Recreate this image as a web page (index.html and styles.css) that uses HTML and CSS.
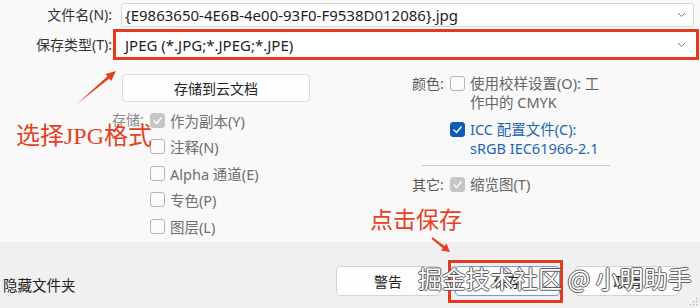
FILE: index.html
```html
<!DOCTYPE html>
<html lang="zh-CN">
<head>
    <meta charset="UTF-8">
    <meta name="viewport" content="width=device-width, initial-scale=1.0">
    <title>另存为</title>
    <link rel="stylesheet" href="styles.css">
</head>
<body>
<div class="dialog">
    <div class="fields">
        <div class="field-row">
            <label class="field-label">文件名(N):</label>
            <div class="field">
                <span>{E9863650-4E6B-4e00-93F0-F9538D012086}.jpg</span>
                <svg class="chevron" width="9" height="6" viewBox="0 0 9 6"><path d="M1 1l3.5 3.5L8 1" fill="none" stroke="#7a7a7a" stroke-width="1"/></svg>
            </div>
        </div>
        <div class="field-row type-row">
            <label class="field-label">保存类型(T):</label>
            <div class="field">
                <span>JPEG (*.JPG;*.JPEG;*.JPE)</span>
                <svg class="chevron" width="9" height="6" viewBox="0 0 9 6"><path d="M1 1l3.5 3.5L8 1" fill="none" stroke="#7a7a7a" stroke-width="1"/></svg>
            </div>
        </div>
    </div>

    <div class="options">
        <div class="col-left">
            <button class="cloud-btn">存储到云文档</button>
            <div class="group">
                <span class="group-label muted">存储:</span>
                <div class="check-list">
                    <div class="check-row">
                        <span class="cb cb-grey"><svg width="11" height="9" viewBox="0 0 11 9"><path d="M1.5 4.5l3 3 5-6" fill="none" stroke="#fff" stroke-width="1.3"/></svg></span>
                        <span class="check-text">作为副本(Y)</span>
                    </div>
                    <div class="check-row"><span class="cb"></span><span class="check-text">注释(N)</span></div>
                    <div class="check-row"><span class="cb"></span><span class="check-text">Alpha 通道(E)</span></div>
                    <div class="check-row"><span class="cb"></span><span class="check-text">专色(P)</span></div>
                    <div class="check-row"><span class="cb"></span><span class="check-text">图层(L)</span></div>
                </div>
            </div>
        </div>

        <div class="col-right">
            <div class="color-group">
                <span class="group-label">颜色:</span>
                <span class="cb"></span>
                <span class="wrap-text">使用校样设置(O): 工<br>作中的 CMYK</span>

                <span></span>
                <span class="cb cb-blue"><svg width="11" height="9" viewBox="0 0 11 9"><path d="M1.5 4.5l3 3 5-6" fill="none" stroke="#fff" stroke-width="1.3"/></svg></span>
                <span class="wrap-text link-text">ICC 配置文件(C):<br>sRGB IEC61966-2.1</span>
            </div>
            <div class="separator"></div>
            <div class="color-group">
                <span class="group-label">其它:</span>
                <span class="cb cb-grey"><svg width="11" height="9" viewBox="0 0 11 9"><path d="M1.5 4.5l3 3 5-6" fill="none" stroke="#fff" stroke-width="1.3"/></svg></span>
                <span class="wrap-text">缩览图(T)</span>
            </div>
        </div>
    </div>

    <div class="footer">
        <span class="hide-folders">隐藏文件夹</span>
        <div class="actions">
            <button class="dlg-btn">警告</button>
            <button class="dlg-btn primary">保存</button>
            <button class="dlg-btn">取消</button>
        </div>
    </div>

    <!-- annotations on top of the screenshot -->
    <div class="mark mark-type"></div>
    <div class="mark mark-save"></div>
    <span class="note note-jpg">选择JPG格式</span>
    <span class="note note-save">点击保存</span>
    <svg class="arrow arrow-type" width="50" height="42" viewBox="0 0 50 42">
        <polygon points="7,38 37.4,10.3 35.5,8 46,5 41.3,14.9 39.3,12.6" fill="#e5401f"/>
    </svg>
    <svg class="arrow arrow-save" width="26" height="22" viewBox="0 0 26 22">
        <polygon points="3.4,4.8 14.8,14.3 12.9,16.6 22,18 18.5,9.5 16.6,11.9 4.6,3.2" fill="#e5401f"/>
    </svg>
    <span class="watermark">掘金技术社区 @ 小明助手</span>
    <svg class="grip" width="8" height="8" viewBox="0 0 8 8">
        <rect x="6" y="0" width="1.2" height="1.2" fill="#aaa"/>
        <rect x="3" y="3" width="1.2" height="1.2" fill="#aaa"/><rect x="6" y="3" width="1.2" height="1.2" fill="#aaa"/>
        <rect x="0" y="6" width="1.2" height="1.2" fill="#aaa"/><rect x="3" y="6" width="1.2" height="1.2" fill="#aaa"/><rect x="6" y="6" width="1.2" height="1.2" fill="#aaa"/>
    </svg>
</div>
</body>
</html>
```

FILE: styles.css
```css
body { margin: 0; background: #f9f9f9; font-family: "Noto Sans", "Noto Sans CJK SC", sans-serif; font-size: 14.5px; color: #222; }
.dialog { position: relative; width: 700px; height: 308px; display: flex; flex-direction: column; overflow: hidden; }

/* file name + type */
.fields { display: flex; flex-direction: column; gap: 6px; padding: 3px 6px 0 0; }
.field-row { display: grid; grid-template-columns: 112px 1fr; column-gap: 9px; height: 24px; }
.field-label { text-align: right; line-height: 24px; color: #333; font-size: 14px; }
.field { display: flex; align-items: center; justify-content: space-between; background: #fff; border: 1px solid #d6d6d6; border-radius: 3px; padding: 0 7px 0 3px; line-height: 22px; font-size: 15px; color: #1e1e1e; }
.type-row .field { border-color: #fff; }
.chevron { flex: none; }

/* options area */
.options { display: flex; margin-top: 17px; flex: 1; }
.col-left { width: 300px; margin-left: 112px; }
.cloud-btn { display: block; margin-left: 10px; width: 188px; height: 28px; background: #fdfdfd; border: 1px solid #dcdcdc; border-radius: 4px; font: inherit; font-size: 14px; color: #222; }
.group { display: flex; margin-top: 5px; }
.group-label { width: 33px; color: #5a5a5a; line-height: 26px; flex: none; font-size: 14px; }
.muted { color: #8a8a8a; }
.check-list { margin-left: 5px; }
.check-row { display: flex; align-items: center; height: 26.5px; }
.check-text { margin-left: 5px; color: #6e6e6e; }

.cb { display: inline-flex; align-items: center; justify-content: center; width: 15px; height: 15px; box-sizing: border-box; border: 1px solid #b4b4b4; border-radius: 3px; background: #fbfbfb; flex: none; }
.cb-grey { background: #c6c6c6; border-color: #c6c6c6; }
.cb-blue { background: #0f5bb5; border-color: #0f5bb5; }

.col-right { width: 200px; }
.color-group { display: grid; grid-template-columns: 33px 15px 140px; column-gap: 5px; row-gap: 8px; align-items: start; }
.color-group .group-label { line-height: 19px; }
.color-group .cb { margin-top: 2px; }
.wrap-text { line-height: 19px; color: #666; white-space: nowrap; }
.link-text { color: #2266b3; }
.separator { margin: 7px 0 9px 10px; width: 188px; height: 1px; background: #c9c9c9; }

/* footer */
.footer { height: 66px; flex: none; display: flex; align-items: flex-start; background: #f0f0f0; padding: 24px 21px 0 3px; box-sizing: border-box; }
.hide-folders { color: #222; line-height: 20px; margin-top: 9px; }
.actions { margin-left: auto; display: flex; gap: 15px; }
.dlg-btn { width: 104px; height: 30px; background: #fdfdfd; border: 1px solid #d3d3d3; border-radius: 4px; font: inherit; font-size: 14px; color: #222; }
.dlg-btn.primary { width: 105px; border-color: #6aa1d8; }

/* annotations */
.mark { position: absolute; box-sizing: border-box; border: 3px solid #e23b1e; }
.mark-type { left: 113px; top: 29px; width: 586px; height: 31px; }
.mark-save { left: 448px; top: 260px; width: 115px; height: 43px; }
.note { position: absolute; color: #e5401f; line-height: 1; white-space: nowrap; }
.note-jpg { left: 16px; top: 124px; font-size: 24px; font-family: "Liberation Serif", "Noto Sans CJK SC", serif; }
.note-save { left: 370px; top: 207px; font-size: 23px; font-family: "Noto Sans CJK SC", sans-serif; }
.arrow { position: absolute; }
.arrow-type { left: 70px; top: 66px; }
.arrow-save { left: 428px; top: 234px; }
.watermark { position: absolute; left: 418px; top: 266px; font-size: 24px; line-height: 1; white-space: nowrap; font-family: "Noto Sans CJK SC", sans-serif; color: #fff; text-shadow: 1px 0 #5c5c5c, -1px 0 #5c5c5c, 0 1px #5c5c5c, 0 -1px #5c5c5c; }
.grip { position: absolute; right: 2px; bottom: 2px; }
```
